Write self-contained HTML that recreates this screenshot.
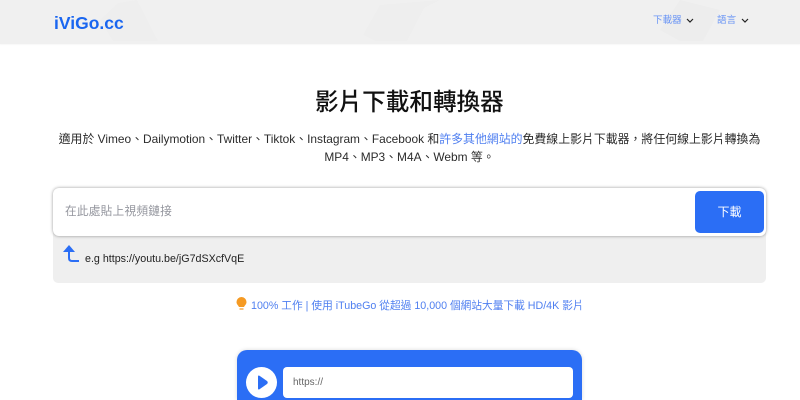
<!DOCTYPE html>
<html lang="zh-Hant">
<head>
<meta charset="utf-8">
<title>iViGo.cc</title>
<style>
*{box-sizing:border-box}
html,body{margin:0;padding:0;width:800px;height:400px;overflow:hidden;background:#fff}
body{font-family:"Liberation Sans","Noto Sans CJK TC",sans-serif;color:#222;position:relative}
.abs{position:absolute;white-space:nowrap}
header{position:absolute;left:0;top:0;width:800px;height:44px;background:#f0f0f0;box-shadow:0 1px 1px rgba(0,0,0,.03);overflow:hidden}
.logo{left:54px;top:12px;font-size:17.500px;line-height:22px;font-weight:700;color:#1a66f0}
.nav{top:13px;font-size:9.600px;line-height:15px;color:#6a95f5}
h1{position:absolute;left:315px;top:86px;margin:0;white-space:nowrap;font-size:23.600px;line-height:34px;font-weight:500;color:#111}
.p{left:9.500px;width:800px;text-align:center;font-size:11.900px;line-height:18px;color:#2b2b2b}
.p a{color:#4f7ff0;text-decoration:none}
.gray{position:absolute;left:53px;top:220px;width:713px;height:63px;background:#efefef;border-radius:5px}
.input{position:absolute;left:53px;top:188px;width:713px;height:48px;background:#fff;border-radius:6px;box-shadow:0 0 3px rgba(0,0,0,.4)}
.ph{left:65px;top:204px;font-size:11.700px;line-height:16px;color:#94969e;letter-spacing:.2px}
.btn{position:absolute;left:695px;top:191px;width:69px;height:42px;background:#2b6ef5;border-radius:5px;color:#fff;font-size:12px;line-height:42px;text-align:center}
.eg{left:85px;top:251px;font-size:10.700px;line-height:16px;color:#222}
.tip{left:251px;top:298px;font-size:10.700px;line-height:16px;color:#4f7ff0}
.card{position:absolute;left:237px;top:350px;width:345px;height:50px;background:#2b6ef5;border-radius:10px 10px 0 0;box-shadow:0 0 4px rgba(0,0,0,.15)}
.circle{position:absolute;left:246px;top:367px;width:31px;height:31px;border-radius:50%;background:#fff}
.url{position:absolute;left:283px;top:367px;width:290px;height:31px;background:#fff;border-radius:4px;padding-left:10px;font-size:10px;line-height:32px;color:#666}
</style>
</head>
<body>
<header>
<svg class="abs" style="left:0;top:0" width="800" height="44">
<path d="M100 20L118 3L137 0L158 41H113Z" fill="#eeeeee"/>
<path d="M363 35L380 5L440 0L424 8L407 41H375Z" fill="#eeeeee"/>
<path d="M660 30L680 0L720 10L703 41H680Z" fill="#ededed"/>
</svg>
</header>
<div class="abs logo">iViGo.cc</div>
<div class="abs nav" style="left:653px">下載器</div>
<svg class="abs" style="left:686px;top:18px" width="8" height="6"><path d="M1 1L4 4L7 1" fill="none" stroke="#222" stroke-width="1.2"/></svg>
<div class="abs nav" style="left:717px">語言</div>
<svg class="abs" style="left:741px;top:18px" width="8" height="6"><path d="M1 1L4 4L7 1" fill="none" stroke="#222" stroke-width="1.2"/></svg>

<h1>影片下載和轉換器</h1>
<div class="abs p" style="top:130px">適用於 Vimeo、Dailymotion、Twitter、Tiktok、Instagram、Facebook 和<a href="#">許多其他網站的</a>免費線上影片下載器，將任何線上影片轉換為</div>
<div class="abs p" style="top:148px">MP4、MP3、M4A、Webm 等。</div>

<div class="gray"></div>
<div class="input"></div>
<div class="abs ph">在此處貼上視頻鏈接</div>
<div class="btn">下載</div>
<svg class="abs" style="left:62px;top:243px" width="18" height="20"><path d="M7 4V15Q7 18 10 18H17" fill="none" stroke="#2b6ef5" stroke-width="2"/><path d="M1 9L7 2L13 9Z" fill="#2b6ef5"/></svg>
<div class="abs eg">e.g https://youtu.be/jG7dSXcfVqE</div>

<svg class="abs" style="left:235px;top:296px" width="13" height="16"><path d="M6.500 1A5 5 0 0 1 11.500 6C11.500 8.500 9.500 9.500 9 11H4C3.500 9.500 1.500 8.500 1.500 6A5 5 0 0 1 6.500 1Z" fill="#f59a23"/><rect x="4.500" y="12" width="4" height="2" fill="#f9c27a"/></svg>
<div class="abs tip">100% 工作 | 使用 iTubeGo 從超過 10,000 個網站大量下載 HD/4K 影片</div>

<div class="card"></div>
<div class="circle"></div>
<svg class="abs" style="left:256px;top:374px" width="13" height="17"><path d="M2 2.500Q2 1 3.500 1.800L11 7Q12.500 8.500 11 10L3.500 15.200Q2 16 2 14.500Z" fill="#2b6ef5"/></svg>
<div class="url">https://</div>
</body>
</html>
